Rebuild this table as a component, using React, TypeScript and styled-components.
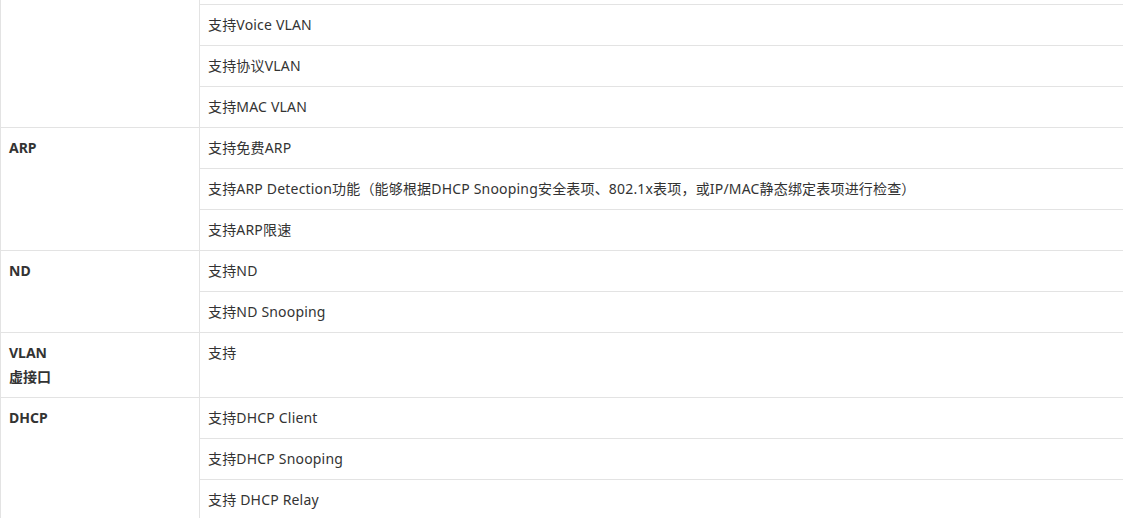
import React from "react";
import styled, { createGlobalStyle } from "styled-components";

type Group = {
  title?: string;
  subtitle?: string;
  items: string[];
  clipped?: boolean;
};

const groups: Group[] = [
  {
    clipped: true,
    items: ["支持Voice VLAN", "支持协议VLAN", "支持MAC VLAN"],
  },
  {
    title: "ARP",
    items: [
      "支持免费ARP",
      "支持ARP Detection功能（能够根据DHCP Snooping安全表项、802.1x表项，或IP/MAC静态绑定表项进行检查）",
      "支持ARP限速",
    ],
  },
  {
    title: "ND",
    items: ["支持ND", "支持ND Snooping"],
  },
  {
    title: "VLAN",
    subtitle: "虚接口",
    items: ["支持"],
  },
  {
    title: "DHCP",
    items: ["支持DHCP Client", "支持DHCP Snooping", "支持 DHCP Relay"],
  },
];

const App: React.FC = () => {
  return (
    <>
      <GlobalStyle />
      <Table>
        {groups.map((group, gi) => (
          <GroupRow key={gi} first={gi === 0}>
            <TitleCell>
              {group.title && <Title>{group.title}</Title>}
              {group.subtitle && <Subtitle>{group.subtitle}</Subtitle>}
            </TitleCell>
            <ItemList>
              {group.clipped && <ClippedItem />}
              {group.items.map((item, ii) => (
                <Item key={ii} divided={group.clipped || ii > 0}>
                  {item}
                </Item>
              ))}
            </ItemList>
          </GroupRow>
        ))}
      </Table>
    </>
  );
};

export default App;

const GlobalStyle = createGlobalStyle`
  html, body {
    margin: 0;
    padding: 0;
    background: #ffffff;
    overflow: hidden;
  }
  body {
    font-family: "Noto Sans", "Noto Sans CJK SC", sans-serif;
    font-size: 14px;
    color: #333333;
  }
`;

const Table = styled.div`
  display: flex;
  flex-direction: column;
  width: 100%;
`;

const GroupRow = styled.div<{ first: boolean }>`
  display: flex;
  border-top: ${({ first }) => (first ? "none" : "1px solid #e3e3e3")};
`;

const TitleCell = styled.div`
  box-sizing: border-box;
  flex: 0 0 200px;
  border-left: 1px solid #e3e3e3;
  border-right: 1px solid #e3e3e3;
  padding: 10px 8px;
`;

const Title = styled.div`
  font-weight: bold;
  line-height: 20px;
  color: #333333;
`;

const Subtitle = styled.div`
  font-weight: bold;
  line-height: 20px;
  margin-top: 4px;
  color: #333333;
`;

const ItemList = styled.div`
  flex: 1;
  display: flex;
  flex-direction: column;
`;

const ClippedItem = styled.div`
  height: 4px;
`;

const Item = styled.div<{ divided: boolean }>`
  padding: 10px 8px;
  line-height: 20px;
  letter-spacing: 0.18px;
  white-space: nowrap;
  border-top: ${({ divided }) => (divided ? "1px solid #e3e3e3" : "none")};
`;
